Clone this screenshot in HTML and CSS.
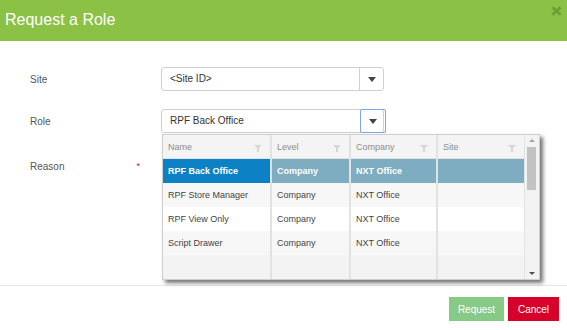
FILE: index.html
```html
<!DOCTYPE html>
<html>

<head>
    <title>Request a Role</title>
    <link rel="stylesheet" href="styles.css">
</head>

<body>
    <div class="dialog">
        <div class="dialog-header">
            <h3>Request a Role</h3>
            <svg class="close" width="11" height="10" viewBox="0 0 11 10">
                <path d="M1.5 1.2 L9.5 8.8 M9.5 1.2 L1.5 8.8" stroke="#6c9d36" stroke-width="2.6" />
            </svg>
        </div>

        <div class="dialog-body">
            <div class="form-row">
                <label>Site</label>
                <div class="select">
                    <span class="select-value">&lt;Site ID&gt;</span>
                    <span class="select-btn"><span class="caret"></span></span>
                </div>
            </div>

            <div class="form-row">
                <label>Role</label>
                <div class="select role">
                    <span class="select-value">RPF Back Office</span>
                    <span class="select-btn focus"><span class="caret"></span></span>

                    <!-- 下拉列表 -->
                    <div class="dropdown">
                        <table class="grid">
                            <colgroup>
                                <col class="c-name">
                                <col class="c-level">
                                <col class="c-company">
                                <col class="c-site">
                            </colgroup>
                            <thead>
                                <tr>
                                    <th>Name<span class="funnel"></span></th>
                                    <th>Level<span class="funnel"></span></th>
                                    <th>Company<span class="funnel"></span></th>
                                    <th>Site<span class="funnel"></span></th>
                                </tr>
                            </thead>
                            <tbody>
                                <tr class="selected">
                                    <td>RPF Back Office</td>
                                    <td>Company</td>
                                    <td>NXT Office</td>
                                    <td></td>
                                </tr>
                                <tr class="alt">
                                    <td>RPF Store Manager</td>
                                    <td>Company</td>
                                    <td>NXT Office</td>
                                    <td></td>
                                </tr>
                                <tr>
                                    <td>RPF View Only</td>
                                    <td>Company</td>
                                    <td>NXT Office</td>
                                    <td></td>
                                </tr>
                                <tr class="alt">
                                    <td>Script Drawer</td>
                                    <td>Company</td>
                                    <td>NXT Office</td>
                                    <td></td>
                                </tr>
                                <tr class="empty">
                                    <td></td>
                                    <td></td>
                                    <td></td>
                                    <td></td>
                                </tr>
                            </tbody>
                        </table>
                        <div class="scrollbar">
                            <span class="arrow-up"></span>
                            <span class="thumb"></span>
                            <span class="arrow-down"></span>
                        </div>
                    </div>
                </div>
            </div>

            <div class="form-row reason">
                <label>Reason<span class="required">*</span></label>
            </div>
        </div>

        <div class="dialog-footer">
            <button class="btn btn-request">Request</button>
            <button class="btn btn-cancel">Cancel</button>
        </div>
    </div>
</body>

</html>
```

FILE: styles.css
```css
body {
    margin: 0;
    font-family: "Liberation Sans", Arial, sans-serif;
    background: #ffffff;
}

.dialog {
    width: 567px;
    height: 330px;
    background: #ffffff;
}

.dialog-header {
    height: 41px;
    background: #8bc145;
    display: flex;
    justify-content: space-between;
    align-items: flex-start;
}

.dialog-header h3 {
    margin: 0;
    padding: 11px 0 0 5px;
    color: #ffffff;
    font-size: 16px;
    font-weight: normal;
}

.close {
    margin: 6px 5px 0 0;
}

.dialog-body {
    height: 218px;
    padding: 26px 0 0 30px;
    border-bottom: 1px solid #e6e6e6;
}

.form-row {
    display: flex;
    align-items: center;
    height: 24px;
    margin-bottom: 18px;
}

.form-row label {
    width: 131px;
    padding-right: 21px;
    box-sizing: border-box;
    display: flex;
    justify-content: space-between;
    color: #555555;
    font-size: 10px;
}

/* 与上一行的 margin 会合并 */
.form-row.reason {
    margin-top: 21px;
}

.required {
    color: #e0002a;
    font-size: 9px;
}

/* 下拉框 */
.select {
    position: relative;
    width: 223px;
    height: 24px;
    box-sizing: border-box;
    border: 1px solid #d0d0d0;
    border-radius: 3px;
    display: flex;
    font-size: 10px;
    color: #333333;
}

.select-value {
    flex: 1;
    padding-left: 8px;
    line-height: 22px;
}

.select-btn {
    width: 23px;
    border-left: 1px solid #d0d0d0;
    display: flex;
    align-items: center;
    justify-content: center;
}

.select-btn.focus {
    width: 24px;
    margin: -1px -3px -1px 0;
    border: 1px solid #7ea6e6;
    border-radius: 2px;
}

.caret {
    width: 0;
    height: 0;
    border-left: 4px solid transparent;
    border-right: 4px solid transparent;
    border-top: 5px solid #444444;
}

.dropdown {
    position: absolute;
    top: 24px;
    left: 0;
    width: 376px;
    height: 144px;
    border: 1px solid #cfcfcf;
    background: #f3f3f3;
    box-shadow: 3px 3px 4px rgba(0, 0, 0, 0.55);
    display: flex;
    z-index: 2;
}

.grid {
    border-collapse: collapse;
    table-layout: fixed;
    width: 361px;
    font-size: 9px;
}

.c-name {
    width: 108px;
}

.c-level {
    width: 79px;
}

.c-company {
    width: 87px;
}

.grid th,
.grid td {
    height: 24px;
    padding: 0 0 0 5px;
    border-right: 2px solid #e2e2e2;
    text-align: left;
    white-space: nowrap;
    overflow: hidden;
    color: #444444;
}

.grid th {
    position: relative;
    height: 23px;
    background: #f4f4f4;
    color: #8c8c8c;
    font-weight: normal;
    border-bottom: 1px solid #e2e2e2;
}

.grid th:last-child,
.grid td:last-child {
    border-right: none;
}

.funnel {
    position: absolute;
    right: 8px;
    top: 10px;
    width: 0;
    height: 0;
    border-left: 4px solid transparent;
    border-right: 4px solid transparent;
    border-top: 4px solid #d6d6d6;
}

.funnel:after {
    content: "";
    position: absolute;
    left: -1px;
    top: -1px;
    width: 2px;
    height: 4px;
    background: #d6d6d6;
}

.grid tbody tr {
    background: #ffffff;
}

.grid tbody tr.alt {
    background: #f7f7f7;
}

.grid tbody tr.empty {
    background: #f3f3f3;
}

.grid tr.selected td {
    background: #7eacc0;
    color: #ffffff;
    font-weight: bold;
    border-right-color: #e2e2e2;
}

.grid tr.selected td:first-child {
    background: #0c82c4;
}

.scrollbar {
    flex: 1;
    position: relative;
    border-left: 1px solid #e2e2e2;
    background: #f3f3f3;
}

.thumb {
    position: absolute;
    top: 12px;
    left: 2px;
    width: 9px;
    height: 43px;
    background: #c2c2c2;
}

.arrow-up,
.arrow-down {
    position: absolute;
    left: 4px;
    width: 0;
    height: 0;
    border-left: 3px solid transparent;
    border-right: 3px solid transparent;
}

.arrow-up {
    top: 4px;
    border-bottom: 3px solid #a3a3a3;
}

.arrow-down {
    bottom: 4px;
    border-top: 3px solid #505050;
}

/* 底部按钮 */
.dialog-footer {
    display: flex;
    justify-content: flex-end;
    gap: 4px;
    padding: 11px 8px 0 0;
}

.btn {
    height: 24px;
    border: none;
    color: #ffffff;
    font-family: "Liberation Sans", Arial, sans-serif;
    font-size: 10px;
    padding: 0;
}

.btn-request {
    width: 55px;
    background: #87c986;
}

.btn-cancel {
    width: 51px;
    background: #d6002b;
}
```
